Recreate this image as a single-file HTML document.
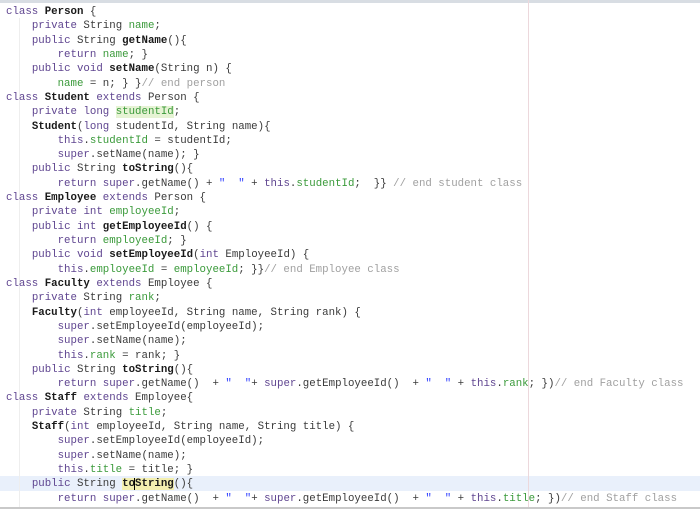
<!DOCTYPE html>
<html><head><meta charset="utf-8"><style>
html,body{margin:0;padding:0;background:#fff;width:700px;height:513px;overflow:hidden;position:relative}
#top{position:absolute;left:0;top:0;width:700px;height:3px;background:#d8dde3}
#bot{position:absolute;left:0;top:507px;width:700px;height:2px;background:#c9c9c9}
#vl{position:absolute;left:528px;top:0;width:1px;height:507px;background:#ecd8dc}
#gl{position:absolute;left:19px;top:18px;width:1px;height:490px;background:#eeeeee}
#hl{position:absolute;left:0;top:476px;width:700px;height:15px;background:#e9f0fb}
pre{position:absolute;left:6px;top:5px;margin:0;font-family:"Liberation Mono",monospace;font-size:10.75px;line-height:14.32px;color:#3a3a3a}
.k{color:#5f4590}.f{color:#3a9a3a}.c{color:#a0a0a0}.s{color:#2f3fff}.b{font-weight:bold;color:#1a1a1a}
.y{background:#f3efb0}.g{background:#e6f3d4}
.cur{border-left:1px solid #000;margin-left:-1px}
</style></head><body>
<div id="top"></div><div id="hl"></div><div id="gl"></div><div id="vl"></div><div id="bot"></div>
<pre><span class="k">class</span> <span class="b">Person</span> {
    <span class="k">private</span> String <span class="f">name</span>;
    <span class="k">public</span> String <span class="b">getName</span>(){
        <span class="k">return</span> <span class="f">name</span>; }
    <span class="k">public</span> <span class="k">void</span> <span class="b">setName</span>(String n) {
        <span class="f">name</span> = n; } }<span class="c">// end person</span>
<span class="k">class</span> <span class="b">Student</span> <span class="k">extends</span> Person {
    <span class="k">private</span> <span class="k">long</span> <span class="f g">studentId</span>;
    <span class="b">Student</span>(<span class="k">long</span> studentId, String name){
        <span class="k">this</span>.<span class="f">studentId</span> = studentId;
        <span class="k">super</span>.setName(name); }
    <span class="k">public</span> String <span class="b">toString</span>(){
        <span class="k">return</span> <span class="k">super</span>.getName() + <span class="s">"  "</span> + <span class="k">this</span>.<span class="f">studentId</span>;  }} <span class="c">// end student class</span>
<span class="k">class</span> <span class="b">Employee</span> <span class="k">extends</span> Person {
    <span class="k">private</span> <span class="k">int</span> <span class="f">employeeId</span>;
    <span class="k">public</span> <span class="k">int</span> <span class="b">getEmployeeId</span>() {
        <span class="k">return</span> <span class="f">employeeId</span>; }
    <span class="k">public</span> <span class="k">void</span> <span class="b">setEmployeeId</span>(<span class="k">int</span> EmployeeId) {
        <span class="k">this</span>.<span class="f">employeeId</span> = <span class="f">employeeId</span>; }}<span class="c">// end Employee class</span>
<span class="k">class</span> <span class="b">Faculty</span> <span class="k">extends</span> Employee {
    <span class="k">private</span> String <span class="f">rank</span>;
    <span class="b">Faculty</span>(<span class="k">int</span> employeeId, String name, String rank) {
        <span class="k">super</span>.setEmployeeId(employeeId);
        <span class="k">super</span>.setName(name);
        <span class="k">this</span>.<span class="f">rank</span> = rank; }
    <span class="k">public</span> String <span class="b">toString</span>(){
        <span class="k">return</span> <span class="k">super</span>.getName()  + <span class="s">"  "</span>+ <span class="k">super</span>.getEmployeeId()  + <span class="s">"  "</span> + <span class="k">this</span>.<span class="f">rank</span>; })<span class="c">// end Faculty class</span>
<span class="k">class</span> <span class="b">Staff</span> <span class="k">extends</span> Employee{
    <span class="k">private</span> String <span class="f">title</span>;
    <span class="b">Staff</span>(<span class="k">int</span> employeeId, String name, String title) {
        <span class="k">super</span>.setEmployeeId(employeeId);
        <span class="k">super</span>.setName(name);
        <span class="k">this</span>.<span class="f">title</span> = title; }
    <span class="k">public</span> String <span class="b y">to<span class="cur"></span>String</span>(){
        <span class="k">return</span> <span class="k">super</span>.getName()  + <span class="s">"  "</span>+ <span class="k">super</span>.getEmployeeId()  + <span class="s">"  "</span> + <span class="k">this</span>.<span class="f">title</span>; })<span class="c">// end Staff class</span></pre>
</body></html>
